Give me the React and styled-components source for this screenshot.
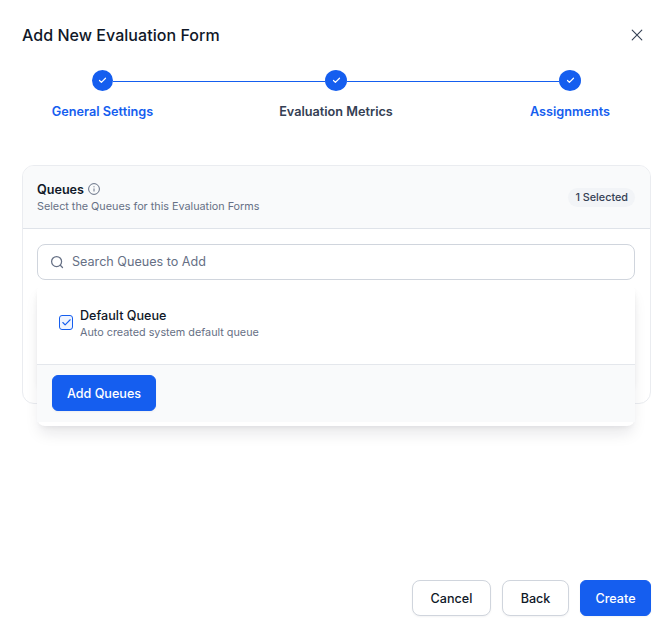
import React from "react";
import styled, { createGlobalStyle } from "styled-components";

const GlobalStyle = createGlobalStyle`
  *, *::before, *::after { box-sizing: border-box; }
  body { margin: 0; background: #fff; font-family: Inter, sans-serif; color: #101828; }
  h1, h2, p { margin: 0; }
  button, input { font-family: inherit; }
  svg { display: block; flex: none; }
`;

const Dialog = styled.main`
  display: flex;
  flex-direction: column;
  height: 628px;
  padding: 23px 13px 12px 22px;
`;

const Header = styled.header`
  display: flex;
  align-items: center;
  justify-content: space-between;
  height: 24px;
`;

const Title = styled.h1`
  font-size: 16px;
  line-height: 24px;
  font-weight: 500;
  letter-spacing: 0.04px;
`;

const CloseButton = styled.button`
  display: flex;
  padding: 0;
  margin-right: 8px;
  border: 0;
  background: none;
  color: #344054;
`;

const Stepper = styled.ol`
  display: grid;
  grid-template-columns: 161px 306px 162px;
  list-style: none;
  margin: 23px 0 0;
  padding: 0;
`;

const Step = styled.li`
  display: flex;
  flex-direction: column;
  align-items: center;
`;

const Track = styled.div`
  display: flex;
  align-items: center;
  width: 100%;
`;

const Rail = styled.span`
  flex: 1;
  height: 1px;
  margin-top: 1px;
  background: ${(p) => (p.$visible ? "#155eef" : "transparent")};
`;

const Dot = styled.span`
  display: flex;
  align-items: center;
  justify-content: center;
  width: ${(p) => p.$size}px;
  height: 21px;
  padding-bottom: 1px;
  border-radius: 50%;
  background: #155eef;
  color: #fff;
`;

const StepLabel = styled.span`
  margin-top: 11px;
  font-size: 12.7px;
  line-height: 20px;
  font-weight: 600;
  color: ${(p) => (p.$muted ? "#344054" : "#155eef")};
`;

const Card = styled.section`
  height: 239px;
  margin-top: 43px;
  border: 1px solid #eaecf0;
  border-radius: 12px;
`;

const CardHeader = styled.div`
  display: flex;
  align-items: center;
  justify-content: space-between;
  height: 63px;
  padding: 0 15px 0 14px;
  border-bottom: 1px solid #dfe3e9;
  border-radius: 11px 11px 0 0;
  background: #f9fafb;
`;

const Heading = styled.div`
  padding-top: 2px;
`;

const CardTitle = styled.h2`
  display: flex;
  align-items: center;
  gap: 4px;
  font-size: 12.6px;
  line-height: 18px;
  font-weight: 600;
  svg { color: #667085; margin-top: -2px; }
`;

const Caption = styled.p`
  font-size: 10.8px;
  line-height: 16px;
  color: #667085;
`;

const Badge = styled.span`
  height: 19px;
  padding: 0 7px;
  border-radius: 10px;
  background: #f2f4f7;
  color: #344054;
  font-size: 10.8px;
  line-height: 19px;
  font-weight: 500;
`;

const CardBody = styled.div`
  position: relative;
  padding: 15px 15px 0 14px;
`;

const SearchField = styled.label`
  display: flex;
  align-items: center;
  gap: 8px;
  height: 36px;
  padding: 0 12px;
  border: 1px solid #d0d5dd;
  border-radius: 8px;
  color: #667085;
`;

const SearchInput = styled.input`
  flex: 1;
  padding: 0;
  border: 0;
  outline: 0;
  background: none;
  font-size: 12.6px;
  line-height: 20px;
  &::placeholder { color: #667085; opacity: 1; }
`;

const Menu = styled.div`
  position: absolute;
  top: 55px;
  left: 14px;
  right: 15px;
  height: 142px;
  padding-bottom: 4px;
  border-radius: 8px;
  background: #fff;
  box-shadow: 0 10px 15px -3px rgba(16, 24, 40, 0.1), 0 4px 6px -4px rgba(16, 24, 40, 0.08);

  &::before {
    content: "";
    position: absolute;
    z-index: -1;
    inset: 0 0 38px;
    border-radius: 8px;
    box-shadow: 0 4px 6px -2px rgba(16, 24, 40, 0.1);
  }
`;

const Options = styled.div`
  height: 81px;
  padding: 23px 22px 0;
  border-bottom: 1px solid #e4e7ec;
`;

const Option = styled.div`
  display: flex;
  align-items: center;
  gap: 7px;
`;

const Checkbox = styled.span`
  display: flex;
  align-items: center;
  justify-content: center;
  width: 14px;
  height: 15px;
  margin-top: -3px;
  border: 1px solid #155eef;
  border-radius: 3px;
  background: #eff4ff;
  color: #155eef;
`;

const OptionTitle = styled.p`
  font-size: 12.6px;
  line-height: 18px;
  font-weight: 500;
`;

const MenuFooter = styled.div`
  height: 57px;
  padding: 10px 15px;
  background: #f9fafb;
`;

const Button = styled.button`
  height: 36px;
  width: ${(p) => p.$width}px;
  padding: 2px 0 0;
  border: 1px solid ${(p) => (p.$primary ? "#155eef" : "#d0d5dd")};
  border-radius: ${(p) => (p.$primary ? 6 : 8)}px;
  background: ${(p) => (p.$primary ? "#155eef" : "#fff")};
  color: ${(p) => (p.$primary ? "#fff" : "#101828")};
  font-size: 12.6px;
  line-height: 20px;
  font-weight: 500;
  box-shadow: 0 1px 2px rgba(16, 24, 40, 0.05);
`;

const Actions = styled.footer`
  display: flex;
  justify-content: flex-end;
  gap: 11px;
  margin-top: auto;
`;

const Check = ({ size, stroke }) => (
  <svg width={size} height={size} viewBox="0 0 12 12" fill="none" stroke="currentColor" strokeWidth={stroke} strokeLinecap="round" strokeLinejoin="round">
    <path d="M10 3 4.5 8.5 2 6" />
  </svg>
);

const steps = [
  { label: "General Settings", size: 21 },
  { label: "Evaluation Metrics", size: 22, muted: true },
  { label: "Assignments", size: 22 },
];

export default function App() {
  return (
    <>
      <GlobalStyle />
      <Dialog>
        <Header>
          <Title>Add New Evaluation Form</Title>
          <CloseButton aria-label="Close">
            <svg width="12" height="12" viewBox="0 0 12 12" fill="none" stroke="currentColor" strokeWidth="1.1" strokeLinecap="round">
              <path d="m1.2 1.2 9.6 9.6M10.8 1.2 1.2 10.8" />
            </svg>
          </CloseButton>
        </Header>
        <Stepper>
          {steps.map((step, i) => (
            <Step key={step.label}>
              <Track>
                <Rail $visible={i > 0} />
                <Dot $size={step.size}><Check size={9} stroke={1.6} /></Dot>
                <Rail $visible={i < steps.length - 1} />
              </Track>
              <StepLabel $muted={step.muted}>{step.label}</StepLabel>
            </Step>
          ))}
        </Stepper>
        <Card>
          <CardHeader>
            <Heading>
              <CardTitle>
                Queues
                <svg width="12" height="12" viewBox="0 0 12 12" fill="none" stroke="currentColor">
                  <circle cx="6" cy="6" r="5.4" />
                  <path d="M6 5.5v3M6 3.3v1" />
                </svg>
              </CardTitle>
              <Caption>Select the Queues for this Evaluation Forms</Caption>
            </Heading>
            <Badge>1 Selected</Badge>
          </CardHeader>
          <CardBody>
            <SearchField>
              <svg width="14" height="14" viewBox="0 0 14 14" fill="none" stroke="currentColor" strokeWidth="1.25" strokeLinecap="round">
                <circle cx="6.6" cy="6.6" r="5" />
                <path d="m10.3 10.3 2.2 2.2" />
              </svg>
              <SearchInput placeholder="Search Queues to Add" />
            </SearchField>
            <Menu>
              <Options>
                <Option>
                  <Checkbox><Check size={11} stroke={1.2} /></Checkbox>
                  <div>
                    <OptionTitle>Default Queue</OptionTitle>
                    <Caption>Auto created system default queue</Caption>
                  </div>
                </Option>
              </Options>
              <MenuFooter>
                <Button $primary $width={104}>Add Queues</Button>
              </MenuFooter>
            </Menu>
          </CardBody>
        </Card>
        <Actions>
          <Button $width={79}>Cancel</Button>
          <Button $width={67}>Back</Button>
          <Button $primary $width={71}>Create</Button>
        </Actions>
      </Dialog>
    </>
  );
}
